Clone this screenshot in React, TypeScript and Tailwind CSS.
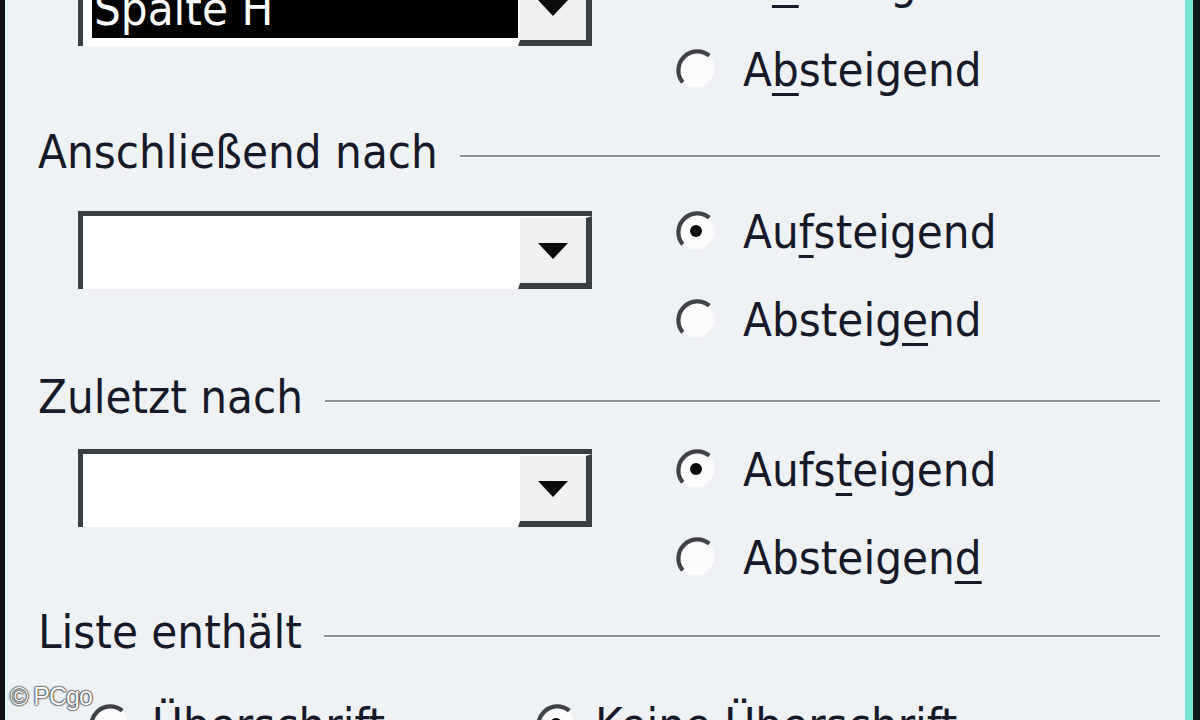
import React from "react";

function Radio({ checked }: { checked?: boolean }) {
  return (
    <svg width="42" height="42" viewBox="0 0 12 12" className="shrink-0">
      <circle cx="6" cy="6" r="5.3" fill="#fbfcfc" />
      <path d="M 2.2 9.8 A 5.4 5.4 0 0 1 9.8 2.2" stroke="#3f4346" strokeWidth="1.2" fill="none" />
      {checked && <circle cx="6" cy="6" r="1.7" fill="#0a0a0a" />}
    </svg>
  );
}

function RadioRow({ children, checked }: { children: React.ReactNode; checked?: boolean }) {
  return (
    <div className="h-[88px] flex items-center gap-[26px]">
      <Radio checked={checked} />
      <span className="text-[#16192a]">{children}</span>
    </div>
  );
}

function Combo({ value }: { value?: string }) {
  return (
    <div className="w-[514px] h-[78px] flex border-t-[5px] border-l-[5px] border-[#3b4044] bg-white">
      <div className="flex-1 flex items-stretch pl-[9px] pb-[8px] pt-[5px]">
        {value && (
          <div className="flex-1 bg-black text-white flex items-center pl-[2px]">{value}</div>
        )}
      </div>
      <div className="w-[74px] bg-[#eef0f1] border-l-[2px] border-t-[2px] border-white border-r-[6px] border-b-[6px] border-r-[#3a3f44] border-b-[#3a3f44] flex items-center justify-center">
        <svg width="30" height="16" viewBox="0 0 30 16">
          <path d="M0 0 H30 L15 16 Z" fill="#0b0b0b" />
        </svg>
      </div>
    </div>
  );
}

function Group({
  value,
  up,
  down,
  first,
}: {
  value?: string;
  up: React.ReactNode;
  down: React.ReactNode;
  first?: boolean;
}) {
  return (
    <div className="h-[176px] flex shrink-0">
      <div className="ml-[40px] mt-[24px]">
        <Combo value={value} />
      </div>
      <div className={first ? "ml-[83px] flex flex-col -mt-[7px]" : "ml-[83px] flex flex-col"}>
        <RadioRow checked>{up}</RadioRow>
        <RadioRow>{down}</RadioRow>
      </div>
    </div>
  );
}

function Heading({ children }: { children: React.ReactNode }) {
  return (
    <div className="h-[56px] flex items-center shrink-0">
      <span className="text-[#16192a] whitespace-nowrap">{children}</span>
      <div className="flex-1 ml-[22px] mt-[10px] h-[3px] bg-[#8c9196] border-b border-white" />
    </div>
  );
}

const U = ({ children }: { children: React.ReactNode }) => (
  <span className="underline decoration-[3px] underline-offset-[7px]">{children}</span>
);

export default function App() {
  return (
    <div className="w-[1200px] h-[720px] overflow-hidden flex bg-[#eff2f4] font-['DejaVu_Sans_Condensed','DejaVu_Sans',sans-serif] text-[47px] leading-none relative">
      <div className="w-[5px] bg-[#0d0f10]" />
      <div className="w-[3px] bg-[#dff4f4]" />
      <div className="flex-1 flex flex-col pl-[30px] pr-[25px]">
        <div className="-mt-[56px] shrink-0">
          <Group
            first
            value="Spalte H"
            up={<>A<U>u</U>fsteigend</>}
            down={<>A<U>b</U>steigend</>}
          />
        </div>
        <div className="mt-[3px] shrink-0">
          <Heading>Anschließend nach</Heading>
        </div>
        <div className="mt-[8px] shrink-0">
          <Group up={<>Au<U>f</U>steigend</>} down={<>Absteig<U>e</U>nd</>} />
        </div>
        <div className="mt-[5px] shrink-0">
          <Heading>Zuletzt nach</Heading>
        </div>
        <div className="mt-[1px] shrink-0">
          <Group up={<>Aufs<U>t</U>eigend</>} down={<>Absteigen<U>d</U></>} />
        </div>
        <div className="mt-[2px] shrink-0">
          <Heading>Liste enthält</Heading>
        </div>
        <div className="mt-[21px] h-[88px] flex items-center shrink-0">
          <div className="ml-[50px] w-[447px] flex items-center gap-[22px]">
            <Radio />
            <span className="text-[#16192a]"><U>Ü</U>berschrift</span>
          </div>
          <div className="flex items-center gap-[18px]">
            <Radio checked />
            <span className="text-[#16192a]">Keine Überschrift</span>
          </div>
        </div>
      </div>
      <div className="w-[8px] bg-[#74e6d2]" />
      <div className="w-[7px] bg-[#0c1818]" />
      <div className="absolute left-[10px] top-[684px] text-[25px] tracking-[-1px] text-white font-['Liberation_Sans',sans-serif] [text-shadow:0_0_2px_#222,0_0_2px_#222,0_0_1px_#000]">
        © PCgo
      </div>
    </div>
  );
}
